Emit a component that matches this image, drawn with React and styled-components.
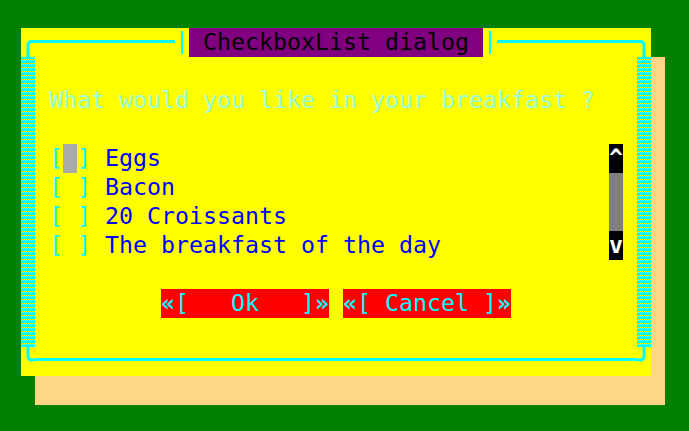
import React from "react";
import styled, { createGlobalStyle } from "styled-components";

const CW = 14;
const CH = 29;

const GlobalStyle = createGlobalStyle`
  html, body { margin: 0; padding: 0; background: #008000; }
  body { font-family: "DejaVu Sans Mono", "Liberation Mono", monospace; }
`;

const Screen = styled.div`
  width: 689px;
  height: 431px;
  box-sizing: border-box;
  padding: 28px 0 0 21px;
  background: #008000;
  overflow: hidden;
`;

const Dialog = styled.div`
  display: grid;
  grid-template-columns: repeat(45, ${CW}px);
  grid-template-rows: repeat(12, ${CH}px);
  width: ${45 * CW}px;
  background: #ffff00;
  box-shadow: ${CW}px ${CH}px 0 #ffd586;
  font-size: 23.25px;
  line-height: 27px;
  white-space: pre;
`;

const Cell = styled.div`
  grid-column: ${(p) => p.$col + 1} / span ${(p) => p.$span || 1};
  grid-row: ${(p) => p.$row + 1} / span ${(p) => p.$rows || 1};
  display: flex;
`;

const HLine = styled(Cell)`
  &::before {
    content: "";
    display: block;
    width: 100%;
    height: 3px;
    margin-top: ${(p) => p.$offset}px;
    background: #00ffff;
  }
`;

const Tee = styled(Cell)`
  justify-content: center;
  align-items: center;
  &::before {
    content: "";
    display: block;
    width: 2px;
    height: 23px;
    background: #00ffff;
  }
`;

const Title = styled(Cell)`
  background: #800080;
  color: #000000;
`;

const Shade = styled(Cell)`
  background-color: #00ffff;
  background-image: conic-gradient(
      at 1px 3px,
      transparent 0 180deg,
      #ffff00 180deg 270deg,
      transparent 270deg
    ),
    conic-gradient(
      at 1px 3px,
      transparent 0 90deg,
      #ffff00 90deg 180deg,
      transparent 180deg
    );
  background-size: 2px 4px, 2px 4px;
  background-position: 0 0, 0 -1px;
`;

const Prompt = styled(Cell)`
  color: #99ffdd;
`;

const ListRow = styled(Cell)`
  color: #0000ff;
`;

const Bracket = styled.span`
  color: #00ffff;
`;

const Box = styled.span`
  display: block;
  width: ${CW}px;
  background: ${(p) => (p.$focus ? "#aaaaaa" : "transparent")};
`;

const ScrollBar = styled(Cell)`
  flex-direction: column;
`;

const ScrollArrow = styled.div`
  height: ${CH}px;
  background: #000000;
  color: #ffffff;
  font-weight: bold;
  text-align: center;
`;

const ScrollTrack = styled.div`
  height: ${CH * 2}px;
  background: #808080;
`;

const Button = styled(Cell)`
  background: #ff0000;
  color: #00ffff;
`;

const Guillemet = styled.span`
  font-weight: bold;
`;

const Corner = ({ col, row, d }) => (
  <Cell $col={col} $row={row}>
    <svg width={CW} height={CH} viewBox={`0 0 ${CW} ${CH}`}>
      <path d={d} fill="none" stroke="#00ffff" strokeWidth="3" />
    </svg>
  </Cell>
);

const items = ["Eggs", "Bacon", "20 Croissants", "The breakfast of the day"];

export default function App() {
  return (
    <>
      <GlobalStyle />
      <Screen>
        <Dialog>
          <Corner col={0} row={0} d="M14 13.5 H11 Q7 13.5 7 17.5 V29" />
          <HLine $col={1} $row={0} $span={10} $offset={12} />
          <Tee $col={11} $row={0} />
          <Title $col={12} $row={0} $span={21}> CheckboxList dialog </Title>
          <Tee $col={33} $row={0} />
          <HLine $col={34} $row={0} $span={10} $offset={12} />
          <Corner col={44} row={0} d="M0 13.5 H3 Q7 13.5 7 17.5 V29" />

          <Shade $col={0} $row={1} $rows={10} />
          <Shade $col={44} $row={1} $rows={10} />

          <Corner col={0} row={11} d="M7 0 V9 Q7 13 11 13 H14" />
          <HLine $col={1} $row={11} $span={43} $offset={11} />
          <Corner col={44} row={11} d="M7 0 V9 Q7 13 3 13 H0" />

          <Prompt $col={2} $row={2} $span={41}>
            What would you like in your breakfast ?
          </Prompt>

          {items.map((label, i) => (
            <ListRow key={label} $col={2} $row={4 + i} $span={40}>
              <Bracket>[</Bracket>
              <Box $focus={i === 0} />
              <Bracket>]</Bracket>
              {" " + label}
            </ListRow>
          ))}

          <ScrollBar $col={42} $row={4} $rows={4}>
            <ScrollArrow>^</ScrollArrow>
            <ScrollTrack />
            <ScrollArrow>v</ScrollArrow>
          </ScrollBar>

          <Button $col={10} $row={9} $span={12}>
            <Guillemet>«</Guillemet>[   Ok   ]<Guillemet>»</Guillemet>
          </Button>
          <Button $col={23} $row={9} $span={12}>
            <Guillemet>«</Guillemet>[ Cancel ]<Guillemet>»</Guillemet>
          </Button>
        </Dialog>
      </Screen>
    </>
  );
}
